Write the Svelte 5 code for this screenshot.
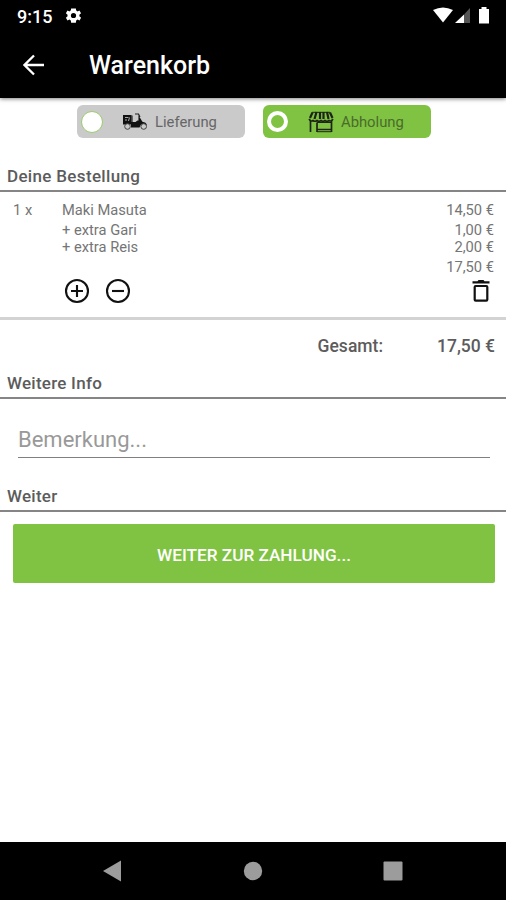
<script>
  let mode = $state("pickup");
  let note = $state("");

  const item = {
    qty: 1,
    name: "Maki Masuta",
    price: 14.5,
    extras: [
      { name: "extra Gari", price: 1 },
      { name: "extra Reis", price: 2 },
    ],
  };

  let total = $derived(item.price + item.extras.reduce((sum, e) => sum + e.price, 0));

  function euro(n) {
    return n.toFixed(2).replace(".", ",") + " €";
  }
</script>

<div class="screen">
  <div class="status">
    <span class="clock">9:15</span>
    <svg class="gear" viewBox="0 0 24 24" width="19" height="19">
      <path fill="#fff" fill-rule="evenodd" d="M19.4 13a7.500 7.500 0 0 0 0-2l2.100-1.700-2-3.500-2.500 1a7.500 7.500 0 0 0-1.700-1L15 3h-6l-.4 2.800a7.500 7.500 0 0 0-1.700 1l-2.500-1-2 3.500L4.500 11a7.500 7.500 0 0 0 0 2l-2.100 1.700 2 3.500 2.500-1a7.500 7.500 0 0 0 1.700 1L9 21h6l.4-2.800a7.500 7.500 0 0 0 1.700-1l2.500 1 2-3.500zM12 15.300a3.300 3.300 0 1 1 0-6.600 3.300 3.300 0 0 1 0 6.600z" />
    </svg>
    <svg class="signals" viewBox="0 0 58 18" width="58" height="18">
      <path fill="#fff" d="M0 3Q10 -2 20 3L10 15.500z" />
      <path fill="#fff" d="M22 16 31 7.500V16z" />
      <path fill="#555" d="M31 7.500 37 1v15h-6z" />
      <path fill="#fff" d="M46 2h2.500V0h5v2H56v14.500H46z" />
    </svg>
  </div>

  <header>
    <svg viewBox="0 0 22 22" width="22" height="22">
      <path d="M21 11H2M11 1.500 1.500 11 11 20.500" fill="none" stroke="#fff" stroke-width="2.300" />
    </svg>
    <h1>Warenkorb</h1>
  </header>

  <main>
    <div class="modes">
      <button class="mode" class:active={mode === "delivery"} onclick={() => (mode = "delivery")}>
        <span class="radio"></span>
        <svg viewBox="0 0 26 20" width="26" height="20">
          <path fill="#111" d="M1 3h8.500v9.500H1z" />
          <path d="M3 5.500h3.500M3 8h2M6.500 9l1-3.500" stroke="#aaa" fill="none" />
          <path d="M10 3.500v8.500M13 2h3.500l1.500 3M17 3.500v5l4.500 2.500" stroke="#222" stroke-width="1.200" fill="none" />
          <path fill="#111" d="M9 10h4.500l2-1.500H17V5l1.500 1.500 2 3.500c2.500 0 4 1 4.500 3.500l-6-1-1.500 3H9z" />
          <circle cx="5.500" cy="14.500" r="2.800" fill="#cacaca" stroke="#444" />
          <circle cx="21.700" cy="14.500" r="2.800" fill="#cacaca" stroke="#444" />
        </svg>
        <span class="mode-label">Lieferung</span>
      </button>
      <button class="mode" class:active={mode === "pickup"} onclick={() => (mode = "pickup")}>
        <span class="radio"></span>
        <svg viewBox="0 0 26 22" width="26" height="22">
          <path d="M4.500 1.500 2 7M8.500 1 6.500 8M12 1v7M15.500 1v7M19 1l1.500 7M22 1.500 24.500 7" stroke="#1c2416" stroke-width="2.200" />
          <path d="M4 1.300h18" stroke="#1c2416" />
          <path d="M1 8q2 3 4 1.500 2 1.500 4 0 2 1.500 4 0 2 1.500 4 0 2 1.500 4 0 2 1.500 4-1.500" fill="none" stroke="#1c2416" stroke-width="1.600" />
          <path d="M2.500 10v11M9 11.500v9.500M23.500 10v11M9 18.500h14.500" stroke="#1c2416" stroke-width="1.700" />
          <path d="M9 11.500h14.500M9 20.700h14.500" stroke="#1c2416" />
        </svg>
        <span class="mode-label">Abholung</span>
      </button>
    </div>

    <h2 class="wide">Deine Bestellung</h2>
    <section class="order">
      <div class="line first"><span class="qty">{item.qty} x</span><span class="name">{item.name}</span><span>{euro(item.price)}</span></div>
      {#each item.extras as extra}
        <div class="line"><span class="qty"></span><span class="name">+ {extra.name}</span><span>{euro(extra.price)}</span></div>
      {/each}
      <div class="line sum"><span>{euro(total)}</span></div>
      <div class="actions">
        <button aria-label="Mehr">
          <svg viewBox="0 0 26 26" width="26" height="26" fill="none" stroke="#111" stroke-width="2.100">
            <circle cx="13" cy="13" r="11" /><path d="M13 7v12M7 13h12" />
          </svg>
        </button>
        <button aria-label="Weniger">
          <svg viewBox="0 0 26 26" width="26" height="26" fill="none" stroke="#111" stroke-width="2.100">
            <circle cx="13" cy="13" r="11" /><path d="M7 13h12" />
          </svg>
        </button>
        <button class="trash" aria-label="Entfernen">
          <svg viewBox="0 0 18 22" width="18" height="22">
            <path fill="#111" d="M0.500 1.300H5.500L6.500 0h5l1 1.300h5v2.200H0.500z" />
            <rect x="2.700" y="6" width="12.600" height="14.700" rx="1" fill="none" stroke="#111" stroke-width="2.200" />
          </svg>
        </button>
      </div>
    </section>

    <div class="total"><span>Gesamt:</span><span class="amount">{euro(total)}</span></div>

    <h2>Weitere Info</h2>
    <div class="note">
      <input type="text" placeholder="Bemerkung..." bind:value={note} />
    </div>

    <h2>Weiter</h2>
    <button class="pay">WEITER ZUR ZAHLUNG...</button>
  </main>

  <nav>
    <svg viewBox="0 0 20 22" width="20" height="22"><path fill="#9c9c9c" d="M0 11 18 0.500v21z" /></svg>
    <svg viewBox="0 0 20 20" width="20" height="20"><circle cx="10" cy="10" r="9.200" fill="#9c9c9c" /></svg>
    <svg viewBox="0 0 20 20" width="20" height="20"><rect x="0.500" y="0.500" width="19" height="19" rx="1" fill="#9c9c9c" /></svg>
  </nav>
</div>

<style>
  :global(body) { margin: 0; background: #fff; }

  .screen {
    display: flex;
    flex-direction: column;
    width: 506px;
    height: 900px;
    overflow: hidden;
    font-family: Roboto, "Liberation Sans", sans-serif;
    color: #757575;
    background: #fff;
  }
  button { border: 0; padding: 0; background: none; font-family: inherit; color: inherit; }
  svg { display: block; flex-shrink: 0; }

  .status { display: flex; align-items: center; height: 32px; padding: 0 15px 0 17px; background: #000; color: #fff; }
  .clock { width: 47px; font-size: 18px; font-weight: 500; }
  .gear { margin-top: -1px; }
  .signals { margin-left: auto; }

  header { display: flex; align-items: center; height: 66px; padding-left: 23px; background: #000; color: #fff; box-shadow: 0 1px 4px rgba(0, 0, 0, 0.5); }
  header svg { margin-top: -1px; }
  h1 { margin: 0 0 0 44px; font-size: 25px; font-weight: 500; }

  main { flex: 1; }
  .modes { display: flex; gap: 18px; padding: 7px 0 0 77px; }
  .mode {
    display: flex;
    align-items: center;
    width: 168px;
    height: 33px;
    padding-left: 4px;
    border-radius: 6px;
    background: #cacaca;
    color: #666;
  }
  .mode.active { background: #80c342; color: #4a6b2c; }
  .mode svg { margin: 0 7px 0 19px; }
  .radio { box-sizing: border-box; width: 22px; height: 22px; border-radius: 50%; background: #fff; border: 1px solid #9ccc6c; }
  .active .radio { margin: 0 1px 0 0; width: 21px; height: 21px; background: none; border: 4px solid #fff; }
  .mode-label { font-size: 14.800px; margin-top: 1px; }

  h2 {
    box-sizing: border-box;
    height: 31px;
    margin: 0;
    padding: 5px 7px 0;
    border-bottom: 2px solid #858585;
    font-size: 17px;
    line-height: 20px;
    font-weight: 500;
    letter-spacing: 0.25px;
    color: #5c5c5c;
  }
  h2.wide { margin-top: 23px; letter-spacing: 0.33px; }

  .order { box-sizing: border-box; height: 128px; padding: 9px 12px 0 13px; border-bottom: 3px solid #d3d3d3; font-size: 14.700px; }
  .line { display: flex; height: 17px; line-height: 18px; }
  .line.first { height: 20px; }
  .line.sum { justify-content: flex-end; height: 18px; margin-top: 3px; }
  .qty { width: 49px; }
  .name { flex: 1; }
  .actions { display: flex; align-items: center; gap: 15px; height: 30px; padding-left: 51px; }
  .trash { margin: 0 4px 0 auto; }

  .total { display: flex; justify-content: flex-end; height: 48px; padding-right: 11px; line-height: 52px; font-size: 17.500px; font-weight: 500; color: #5c5c5c; }
  .amount { width: 112px; text-align: right; }

  .note { height: 82px; padding: 0 16px 0 18px; }
  input {
    box-sizing: border-box;
    width: 100%;
    height: 59px;
    padding: 22px 0 0;
    border: 0;
    border-bottom: 1px solid #808080;
    outline: 0;
    font: 22px Roboto, sans-serif;
  }
  input::placeholder { color: #999; }

  .pay {
    display: block;
    width: 482px;
    height: 59px;
    margin: 12px 0 0 13px;
    padding-top: 2px;
    border-radius: 2px;
    background: #80c342;
    color: #fff;
    font-size: 17.200px;
    font-weight: 500;
  }

  nav { display: flex; justify-content: center; align-items: center; gap: 120px; height: 58px; background: #000; }
</style>
